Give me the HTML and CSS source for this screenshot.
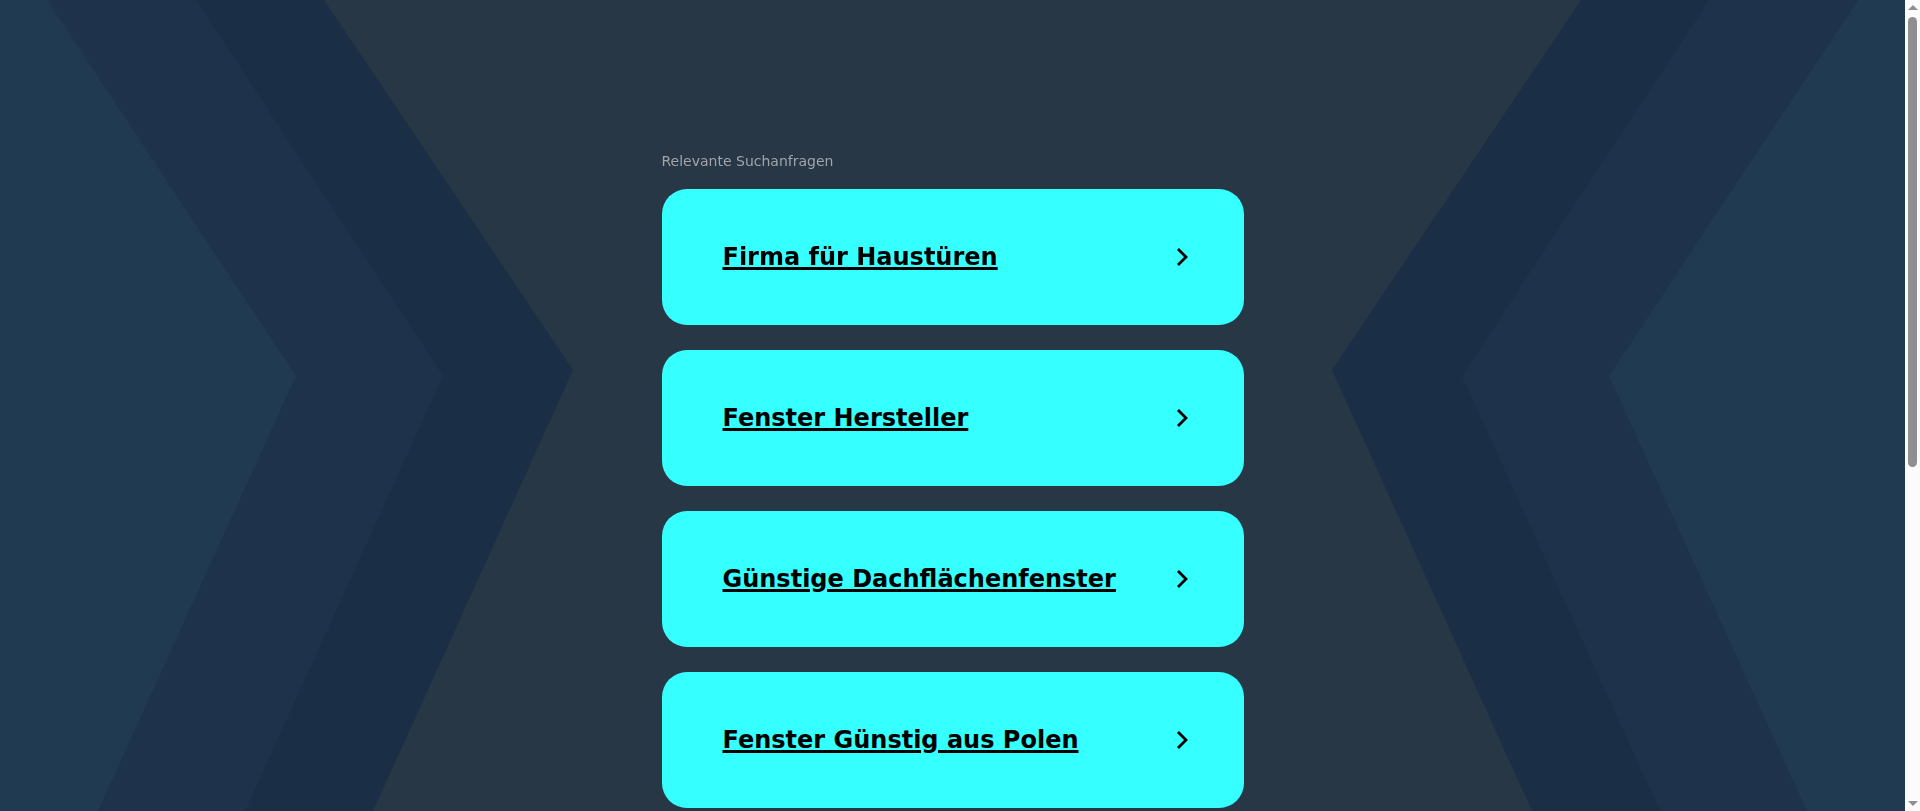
FILE: index.html
```html
<!DOCTYPE html>
<html lang="de">
<head>
<meta charset="utf-8">
<title>Relevante Suchanfragen</title>
<link rel="stylesheet" href="styles.css">
</head>
<body>
<svg class="backdrop" viewBox="0 0 1905 811" preserveAspectRatio="none" aria-hidden="true">
  <polygon points="0,0 324,0 573,370 373,811 0,811" fill="#1a2f45"/>
  <polygon points="0,0 196,0 443,376 245,811 0,811" fill="#1e334b"/>
  <polygon points="0,0 47,0 296,376 98,811 0,811" fill="#1f3a51"/>
  <polygon points="1905,0 1581,0 1332,370 1532,811 1905,811" fill="#1a2f45"/>
  <polygon points="1905,0 1709,0 1462,376 1660,811 1905,811" fill="#1e334b"/>
  <polygon points="1905,0 1858,0 1609,376 1807,811 1905,811" fill="#1f3a51"/>
</svg>
<main class="results">
  <p class="results-title">Relevante Suchanfragen</p>
  <ul class="results-list">
    <li><a class="result-card" href="#"><span class="result-text">Firma für Haustüren</span><svg class="chev" viewBox="0 0 12 20"><path d="M2 2 L10 10 L2 18" fill="none" stroke="#000" stroke-width="2.8"/></svg></a></li>
    <li><a class="result-card" href="#"><span class="result-text">Fenster Hersteller</span><svg class="chev" viewBox="0 0 12 20"><path d="M2 2 L10 10 L2 18" fill="none" stroke="#000" stroke-width="2.8"/></svg></a></li>
    <li><a class="result-card" href="#"><span class="result-text">Günstige Dachflächenfenster</span><svg class="chev" viewBox="0 0 12 20"><path d="M2 2 L10 10 L2 18" fill="none" stroke="#000" stroke-width="2.8"/></svg></a></li>
    <li><a class="result-card" href="#"><span class="result-text">Fenster Günstig aus Polen</span><svg class="chev" viewBox="0 0 12 20"><path d="M2 2 L10 10 L2 18" fill="none" stroke="#000" stroke-width="2.8"/></svg></a></li>
  </ul>
</main>
<div class="scrollbar" aria-hidden="true">
  <span class="sb-arrow sb-up"></span>
  <span class="sb-thumb"></span>
  <span class="sb-arrow sb-down"></span>
</div>
</body>
</html>
```
FILE: styles.css
```css
html, body {
  margin: 0;
  padding: 0;
}
html {
  scrollbar-width: none;
}
body {
  background: #273746;
  font-family: "DejaVu Sans", sans-serif;
  min-height: 1403px;
  padding-right: 15px;
}
.backdrop {
  position: fixed;
  top: 0;
  left: 0;
  width: calc(100% - 15px);
  height: 100%;
  z-index: 0;
}
.results {
  position: relative;
  z-index: 1;
  width: 582px;
  margin: 0 auto;
  padding-top: 151px;
}
.results-title {
  margin: 0 0 18px;
  font-size: 14px;
  line-height: 20px;
  color: #a0a4a9;
}
.results-list {
  list-style: none;
  margin: 0;
  padding: 0;
  display: flex;
  flex-direction: column;
  gap: 25px;
}
.result-card {
  display: flex;
  align-items: center;
  justify-content: space-between;
  height: 136px;
  box-sizing: border-box;
  padding: 0 56px 0 61px;
  background: #36ffff;
  border-radius: 25px;
  color: #000;
  text-decoration: none;
}
.result-text {
  font-size: 24px;
  font-weight: bold;
  text-decoration: underline;
  text-decoration-thickness: 2.5px;
  text-underline-offset: 2px;
}
.chev {
  width: 12px;
  height: 20px;
  flex: none;
}
.scrollbar {
  position: fixed;
  top: 0;
  right: 0;
  width: 15px;
  height: 100%;
  background: #fbfbfb;
  display: flex;
  flex-direction: column;
  align-items: center;
  z-index: 2;
}
.sb-arrow {
  display: block;
  width: 0;
  height: 0;
  border-left: 5px solid transparent;
  border-right: 5px solid transparent;
  flex: none;
}
.sb-up {
  margin-top: 5px;
  border-bottom: 5px solid #8f8f8f;
}
.sb-thumb {
  display: block;
  width: 9px;
  height: 450px;
  margin-top: 7px;
  background: #8f8f8f;
  border-radius: 5px;
  flex: none;
}
.sb-down {
  margin-top: auto;
  margin-bottom: 5px;
  border-top: 5px solid #8f8f8f;
}
```
